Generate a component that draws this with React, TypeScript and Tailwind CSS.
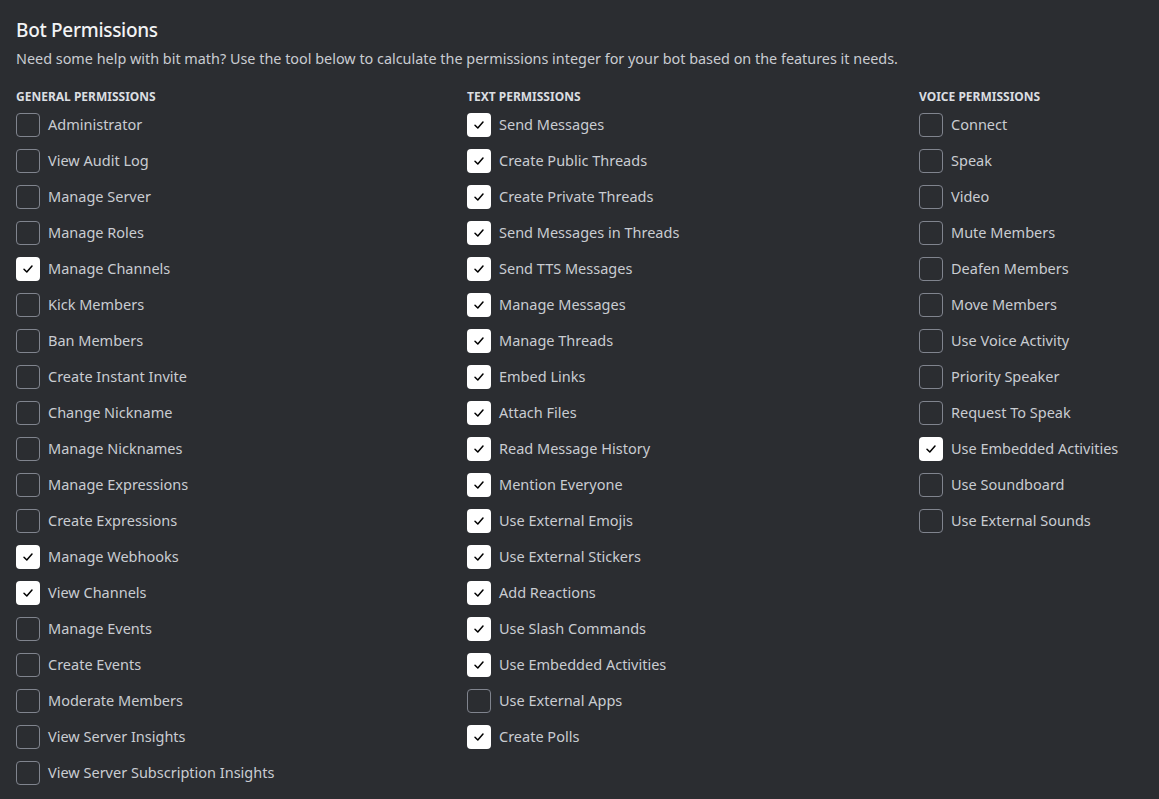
import React from "react";

const general: [string, boolean][] = [
  ["Administrator", false],
  ["View Audit Log", false],
  ["Manage Server", false],
  ["Manage Roles", false],
  ["Manage Channels", true],
  ["Kick Members", false],
  ["Ban Members", false],
  ["Create Instant Invite", false],
  ["Change Nickname", false],
  ["Manage Nicknames", false],
  ["Manage Expressions", false],
  ["Create Expressions", false],
  ["Manage Webhooks", true],
  ["View Channels", true],
  ["Manage Events", false],
  ["Create Events", false],
  ["Moderate Members", false],
  ["View Server Insights", false],
  ["View Server Subscription Insights", false],
];

const text: [string, boolean][] = [
  ["Send Messages", true],
  ["Create Public Threads", true],
  ["Create Private Threads", true],
  ["Send Messages in Threads", true],
  ["Send TTS Messages", true],
  ["Manage Messages", true],
  ["Manage Threads", true],
  ["Embed Links", true],
  ["Attach Files", true],
  ["Read Message History", true],
  ["Mention Everyone", true],
  ["Use External Emojis", true],
  ["Use External Stickers", true],
  ["Add Reactions", true],
  ["Use Slash Commands", true],
  ["Use Embedded Activities", true],
  ["Use External Apps", false],
  ["Create Polls", true],
];

const voice: [string, boolean][] = [
  ["Connect", false],
  ["Speak", false],
  ["Video", false],
  ["Mute Members", false],
  ["Deafen Members", false],
  ["Move Members", false],
  ["Use Voice Activity", false],
  ["Priority Speaker", false],
  ["Request To Speak", false],
  ["Use Embedded Activities", true],
  ["Use Soundboard", false],
  ["Use External Sounds", false],
];

function Check({ checked }: { checked: boolean }) {
  return checked ? (
    <div className="w-6 h-6 rounded-[4px] bg-white flex items-center justify-center shrink-0">
      <svg width="12" height="12" viewBox="0 0 12 12" fill="none">
        <path d="M2 6.2 L4.8 9 L10 3" stroke="#000" strokeWidth="1.5" strokeLinecap="round" strokeLinejoin="round" />
      </svg>
    </div>
  ) : (
    <div className="w-6 h-6 rounded-[4px] border border-[#80848e] shrink-0" />
  );
}

function Column({ title, items }: { title: string; items: [string, boolean][] }) {
  return (
    <div className="flex flex-col">
      <div className="text-[12px] leading-4 font-bold uppercase text-[#dbdee1] mb-[8px]">{title}</div>
      <div className="flex flex-col gap-3">
        {items.map(([label, c], i) => (
          <div key={i} className="flex items-start gap-2 h-6">
            <Check checked={c} />
            <span className="text-[14.5px] leading-[22px] text-[#c9ccd1]">{label}</span>
          </div>
        ))}
      </div>
    </div>
  );
}

export default function App() {
  return (
    <div
      className="w-[1159px] h-[799px] overflow-hidden bg-[#2b2d31] px-4 pt-[18px]"
      style={{ fontFamily: '"Noto Sans", "Open Sans", sans-serif' }}
    >
      <h1 className="text-[19px] leading-6 font-medium tracking-[-0.3px] text-[#f2f3f5]">Bot Permissions</h1>
      <p className="mt-[7px] text-[14.4px] leading-5 text-[#c9ccd1]">
        Need some help with bit math? Use the tool below to calculate the permissions integer for your bot based on the features it needs.
      </p>
      <div className="mt-5 grid grid-cols-[451px_452px_1fr]">
        <Column title="General Permissions" items={general} />
        <Column title="Text Permissions" items={text} />
        <Column title="Voice Permissions" items={voice} />
      </div>
    </div>
  );
}
